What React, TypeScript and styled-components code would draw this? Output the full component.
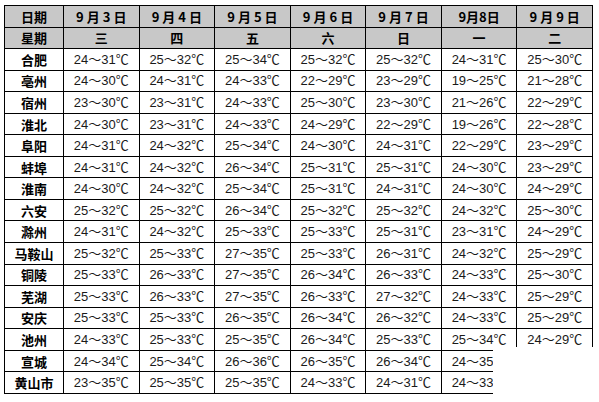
import styled, { createGlobalStyle } from 'styled-components';

const GlobalStyle = createGlobalStyle`
  html, body {
    margin: 0;
    padding: 0;
    background: #ffffff;
  }
  body {
    font-family: 'Liberation Sans', 'Noto Sans CJK SC', sans-serif;
  }
`;

const dates = ['9月3日', '9月4日', '9月5日', '9月6日', '9月7日', '9月8日', '9月9日'];
const weekdays = ['三', '四', '五', '六', '日', '一', '二'];

const rows: [string, string[]][] = [
  ['合肥', ['24～31', '25～32', '25～34', '25～32', '25～32', '24～31', '25～30']],
  ['亳州', ['24～30', '24～31', '24～33', '22～29', '23～29', '19～25', '21～28']],
  ['宿州', ['23～30', '23～31', '24～33', '25～30', '23～30', '21～26', '22～29']],
  ['淮北', ['24～30', '23～31', '24～33', '24～29', '22～29', '19～26', '22～28']],
  ['阜阳', ['24～31', '24～32', '25～34', '24～30', '24～31', '22～29', '23～29']],
  ['蚌埠', ['24～31', '24～32', '26～34', '25～31', '25～31', '24～30', '23～29']],
  ['淮南', ['24～30', '24～32', '25～34', '25～31', '24～31', '24～30', '24～29']],
  ['六安', ['25～32', '25～32', '26～34', '25～32', '25～32', '24～32', '25～30']],
  ['滁州', ['24～31', '24～32', '25～33', '25～33', '25～31', '23～31', '24～29']],
  ['马鞍山', ['25～32', '25～33', '27～35', '25～33', '26～31', '24～32', '25～29']],
  ['铜陵', ['25～33', '26～33', '27～35', '26～34', '26～33', '24～33', '25～30']],
  ['芜湖', ['25～33', '26～33', '27～35', '26～33', '27～32', '24～33', '25～29']],
  ['安庆', ['25～33', '25～33', '26～35', '26～34', '26～32', '24～33', '25～29']],
  ['池州', ['24～33', '25～33', '25～35', '26～34', '25～33', '25～34', '24～29']],
  ['宣城', ['24～34', '25～34', '26～36', '26～35', '26～34', '24～35', '24～30']],
  ['黄山市', ['23～35', '25～35', '25～35', '24～33', '24～31', '24～33', '24～30']],
];

const App = () => {
  return (
    <Page>
      <GlobalStyle />
      <WeatherTable>
        <colgroup>
          <col style={{ width: 59 }} />
          {dates.map(d => (
            <col key={d} />
          ))}
        </colgroup>
        <tbody>
          <tr>
            <HeadCell>日期</HeadCell>
            {dates.map(d => (
              <HeadCell key={d} $spaced={d !== '9月8日'}>
                {d}
              </HeadCell>
            ))}
          </tr>
          <tr>
            <HeadCell>星期</HeadCell>
            {weekdays.map(w => (
              <HeadCell key={w}>{w}</HeadCell>
            ))}
          </tr>
          {rows.map(([city, temps]) => (
            <tr key={city}>
              <CityCell>{city}</CityCell>
              {temps.map((t, i) => (
                <TempCell key={i}>{t}℃</TempCell>
              ))}
            </tr>
          ))}
        </tbody>
      </WeatherTable>
      <Patch />
    </Page>
  );
};

export default App;

const Page = styled.div`
  position: relative;
  width: 599px;
  height: 402px;
  padding: 5px 0 0 4px;
  box-sizing: border-box;
  overflow: hidden;
`;

const WeatherTable = styled.table`
  width: 589px;
  table-layout: fixed;
  border-collapse: collapse;
  border: 1.5px solid #000;
  tr {
    height: 21.55px;
  }
  td {
    border: 1px solid #000;
    padding: 0;
    text-align: center;
    vertical-align: middle;
    white-space: nowrap;
    overflow: hidden;
  }
`;

const HeadCell = styled.td<{ $spaced?: boolean }>`
  background: #c8c8c8;
  font-family: 'Noto Sans CJK SC', sans-serif;
  font-weight: 700;
  font-size: 13px;
  line-height: 15px;
  color: #000;
  letter-spacing: ${p => (p.$spaced ? '3px' : '0')};
  text-indent: ${p => (p.$spaced ? '3px' : '0')};
`;

const CityCell = styled.td`
  font-family: 'Noto Sans CJK SC', sans-serif;
  font-weight: 700;
  font-size: 13px;
  line-height: 15px;
  color: #000;
`;

const TempCell = styled.td`
  font-family: 'Liberation Sans', 'Noto Sans CJK SC', sans-serif;
  font-size: 13px;
  line-height: 15px;
  color: #1a1a1a;
`;

const Patch = styled.div`
  position: absolute;
  left: 493px;
  top: 347px;
  right: 0;
  bottom: 0;
  background: #ffffff;
`;
